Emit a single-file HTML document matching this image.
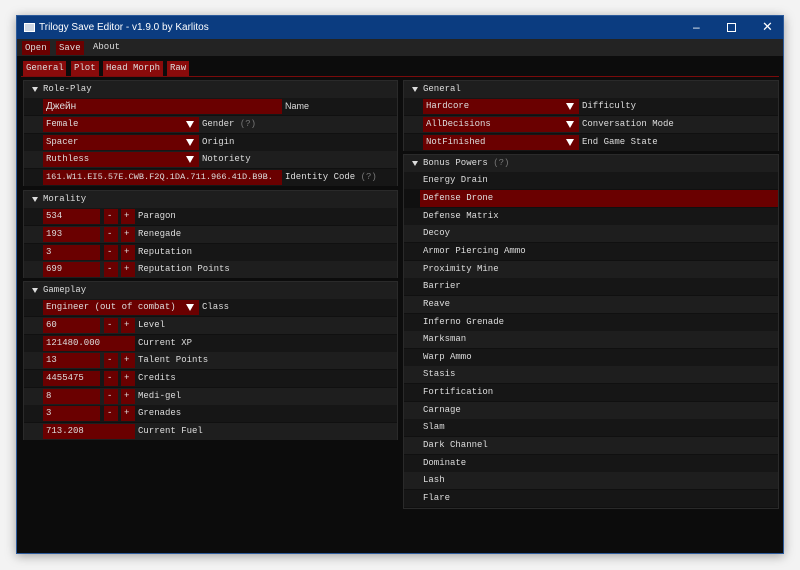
<!DOCTYPE html><html><head><meta charset="utf-8"><style>
*{margin:0;padding:0;box-sizing:border-box}
body{width:800px;height:570px;background:#f3f3f3;position:relative;overflow:hidden;font-family:"Liberation Mono",monospace;font-size:9px;color:#ddd}
.win{position:absolute;left:16px;top:15px;width:768px;height:539px;background:#0c0c0c;border:1px solid #2c5a9a;box-shadow:0 2px 10px rgba(0,0,0,.35)}
.tb{position:absolute;left:0;top:0;width:766px;height:23px;background:#0b3c80;color:#fff;font-family:"Liberation Sans",sans-serif;font-size:10px}
.a{position:absolute;white-space:nowrap;line-height:17px}
.mb{position:absolute;left:0;top:23px;width:766px;height:17px;background:#232323}
.red{background:#6a0000}
.tab{position:absolute;top:45px;height:15px;background:#8a0b0b;line-height:15px;padding-left:3px}
.box{position:absolute;border:1px solid #2a2a2a;background:#101010}
.r{position:absolute;height:17px}
.e{background:#1e1e1e}.o{background:#161616}
.f{position:absolute;top:1px;height:15px;background:#6a0000;line-height:15px;padding-left:3px;white-space:nowrap;overflow:hidden}
.l{position:absolute;line-height:17px;white-space:nowrap}
.g{color:#777}
.tri{position:absolute;top:5px;width:0;height:0;border-left:4px solid transparent;border-right:4px solid transparent;border-top:7px solid #fff}
.ht{position:absolute;top:6px;width:0;height:0;border-left:3px solid transparent;border-right:3px solid transparent;border-top:5px solid #ddd}
</style></head><body>
<div class="win">
<div class="tb"><div style="position:absolute;left:7px;top:7px;width:11px;height:9px;background:#cfd8e4;border:1px solid #fff"></div><div class="a" style="left:22px;top:3px">Trilogy Save Editor - v1.9.0 by Karlitos</div>
<div class="a" style="left:676px;top:3px;font-size:12px">&#8211;</div><div style="position:absolute;left:710px;top:7px;width:9px;height:9px;border:1px solid #fff"></div><div class="a" style="left:745px;top:2px;font-size:13px">&#10005;</div></div>
<div class="mb"><div class="f red" style="left:5px;top:2px;height:14px;width:28px;line-height:14px">Open</div><div class="f red" style="left:39px;top:2px;height:14px;width:28px;line-height:14px">Save</div><div class="a" style="left:76px;top:0px">About</div></div>
<div class="tab" style="left:6px;width:43px">General</div><div class="tab" style="left:54px;width:28px">Plot</div><div class="tab" style="left:86px;width:60px">Head Morph</div><div class="tab" style="left:150px;width:22px">Raw</div>
<div style="position:absolute;left:4px;top:60px;width:758px;height:1px;background:#7a0b0b"></div>

<!-- LEFT -->
<div class="box" style="left:6px;top:64px;width:375px;height:106px">
<div class="r e" style="left:0;top:0;width:373px"><div class="ht" style="left:8px"></div><div class="l" style="left:19px">Role-Play</div></div>
<div class="r o" style="left:0;top:17px;width:373px"><div class="f" style="left:19px;width:239px;font-family:'Liberation Sans','Noto Sans CJK SC',sans-serif;font-size:10px">Джейн</div><div class="l" style="left:261px;font-family:'Liberation Sans',sans-serif">Name</div></div>
<div class="r e" style="left:0;top:35px;width:373px"><div class="f" style="left:19px;width:156px">Female</div><div class="tri" style="left:162px"></div><div class="l" style="left:178px">Gender <span class="g">(?)</span></div></div>
<div class="r o" style="left:0;top:53px;width:373px"><div class="f" style="left:19px;width:156px">Spacer</div><div class="tri" style="left:162px"></div><div class="l" style="left:178px">Origin</div></div>
<div class="r e" style="left:0;top:70px;width:373px"><div class="f" style="left:19px;width:156px">Ruthless</div><div class="tri" style="left:162px"></div><div class="l" style="left:178px">Notoriety</div></div>
<div class="r o" style="left:0;top:88px;width:373px"><div class="f" style="left:19px;width:239px;font-size:8.6px">161.W11.EI5.57E.CWB.F2Q.1DA.711.966.41D.B9B.</div><div class="l" style="left:261px">Identity Code <span class="g">(?)</span></div></div>
</div>

<div class="box" style="left:6px;top:174px;width:375px;height:88px">
<div class="r e" style="left:0;top:0;width:373px"><div class="ht" style="left:8px"></div><div class="l" style="left:19px">Morality</div></div>
<div class="r o" style="left:0;top:17px;width:373px"><div class="f" style="left:19px;width:57px">534</div><div class="f" style="left:80px;width:14px">-</div><div class="f" style="left:97px;width:14px">+</div><div class="l" style="left:114px">Paragon</div></div>
<div class="r e" style="left:0;top:35px;width:373px"><div class="f" style="left:19px;width:57px">193</div><div class="f" style="left:80px;width:14px">-</div><div class="f" style="left:97px;width:14px">+</div><div class="l" style="left:114px">Renegade</div></div>
<div class="r o" style="left:0;top:53px;width:373px"><div class="f" style="left:19px;width:57px">3</div><div class="f" style="left:80px;width:14px">-</div><div class="f" style="left:97px;width:14px">+</div><div class="l" style="left:114px">Reputation</div></div>
<div class="r e" style="left:0;top:70px;width:373px"><div class="f" style="left:19px;width:57px">699</div><div class="f" style="left:80px;width:14px">-</div><div class="f" style="left:97px;width:14px">+</div><div class="l" style="left:114px">Reputation Points</div></div>
</div>

<div class="box" style="left:6px;top:265px;width:375px;height:159px">
<div class="r e" style="left:0;top:0;width:373px"><div class="ht" style="left:8px"></div><div class="l" style="left:19px">Gameplay</div></div>
<div class="r o" style="left:0;top:17px;width:373px"><div class="f" style="left:19px;width:156px">Engineer (out of combat)</div><div class="tri" style="left:162px"></div><div class="l" style="left:178px">Class</div></div>
<div class="r e" style="left:0;top:35px;width:373px"><div class="f" style="left:19px;width:57px">60</div><div class="f" style="left:80px;width:14px">-</div><div class="f" style="left:97px;width:14px">+</div><div class="l" style="left:114px">Level</div></div>
<div class="r o" style="left:0;top:53px;width:373px"><div class="f" style="left:19px;width:92px">121480.000</div><div class="l" style="left:114px">Current XP</div></div>
<div class="r e" style="left:0;top:70px;width:373px"><div class="f" style="left:19px;width:57px">13</div><div class="f" style="left:80px;width:14px">-</div><div class="f" style="left:97px;width:14px">+</div><div class="l" style="left:114px">Talent Points</div></div>
<div class="r o" style="left:0;top:88px;width:373px"><div class="f" style="left:19px;width:57px">4455475</div><div class="f" style="left:80px;width:14px">-</div><div class="f" style="left:97px;width:14px">+</div><div class="l" style="left:114px">Credits</div></div>
<div class="r e" style="left:0;top:106px;width:373px"><div class="f" style="left:19px;width:57px">8</div><div class="f" style="left:80px;width:14px">-</div><div class="f" style="left:97px;width:14px">+</div><div class="l" style="left:114px">Medi-gel</div></div>
<div class="r o" style="left:0;top:123px;width:373px"><div class="f" style="left:19px;width:57px">3</div><div class="f" style="left:80px;width:14px">-</div><div class="f" style="left:97px;width:14px">+</div><div class="l" style="left:114px">Grenades</div></div>
<div class="r e" style="left:0;top:141px;width:373px"><div class="f" style="left:19px;width:92px">713.208</div><div class="l" style="left:114px">Current Fuel</div></div>
</div>

<!-- RIGHT -->
<div class="box" style="left:386px;top:64px;width:376px;height:71px">
<div class="r e" style="left:0;top:0;width:374px"><div class="ht" style="left:8px"></div><div class="l" style="left:19px">General</div></div>
<div class="r o" style="left:0;top:17px;width:374px"><div class="f" style="left:19px;width:156px">Hardcore</div><div class="tri" style="left:162px"></div><div class="l" style="left:178px">Difficulty</div></div>
<div class="r e" style="left:0;top:35px;width:374px"><div class="f" style="left:19px;width:156px">AllDecisions</div><div class="tri" style="left:162px"></div><div class="l" style="left:178px">Conversation Mode</div></div>
<div class="r o" style="left:0;top:53px;width:374px"><div class="f" style="left:19px;width:156px">NotFinished</div><div class="tri" style="left:162px"></div><div class="l" style="left:178px">End Game State</div></div>
</div>

<div class="box" style="left:386px;top:138px;width:376px;height:355px">
<div class="r e" style="left:0;top:0;width:374px"><div class="ht" style="left:8px"></div><div class="l" style="left:19px">Bonus Powers <span class="g">(?)</span></div></div>
<div class="r o" style="left:0;top:17px;width:374px"><div class="l" style="left:19px">Energy Drain</div></div>
<div class="r" style="left:16px;top:35px;width:358px;background:#6a0000"><div class="l" style="left:3px">Defense Drone</div></div>
<div class="r o" style="left:0;top:53px;width:374px"><div class="l" style="left:19px">Defense Matrix</div></div>
<div class="r e" style="left:0;top:70px;width:374px"><div class="l" style="left:19px">Decoy</div></div>
<div class="r o" style="left:0;top:88px;width:374px"><div class="l" style="left:19px">Armor Piercing Ammo</div></div>
<div class="r e" style="left:0;top:106px;width:374px"><div class="l" style="left:19px">Proximity Mine</div></div>
<div class="r o" style="left:0;top:123px;width:374px"><div class="l" style="left:19px">Barrier</div></div>
<div class="r e" style="left:0;top:141px;width:374px"><div class="l" style="left:19px">Reave</div></div>
<div class="r o" style="left:0;top:159px;width:374px"><div class="l" style="left:19px">Inferno Grenade</div></div>
<div class="r e" style="left:0;top:176px;width:374px"><div class="l" style="left:19px">Marksman</div></div>
<div class="r o" style="left:0;top:194px;width:374px"><div class="l" style="left:19px">Warp Ammo</div></div>
<div class="r e" style="left:0;top:211px;width:374px"><div class="l" style="left:19px">Stasis</div></div>
<div class="r o" style="left:0;top:229px;width:374px"><div class="l" style="left:19px">Fortification</div></div>
<div class="r e" style="left:0;top:247px;width:374px"><div class="l" style="left:19px">Carnage</div></div>
<div class="r o" style="left:0;top:264px;width:374px"><div class="l" style="left:19px">Slam</div></div>
<div class="r e" style="left:0;top:282px;width:374px"><div class="l" style="left:19px">Dark Channel</div></div>
<div class="r o" style="left:0;top:300px;width:374px"><div class="l" style="left:19px">Dominate</div></div>
<div class="r e" style="left:0;top:317px;width:374px"><div class="l" style="left:19px">Lash</div></div>
<div class="r o" style="left:0;top:335px;width:374px"><div class="l" style="left:19px">Flare</div></div>
</div>
</div>
</body></html>
